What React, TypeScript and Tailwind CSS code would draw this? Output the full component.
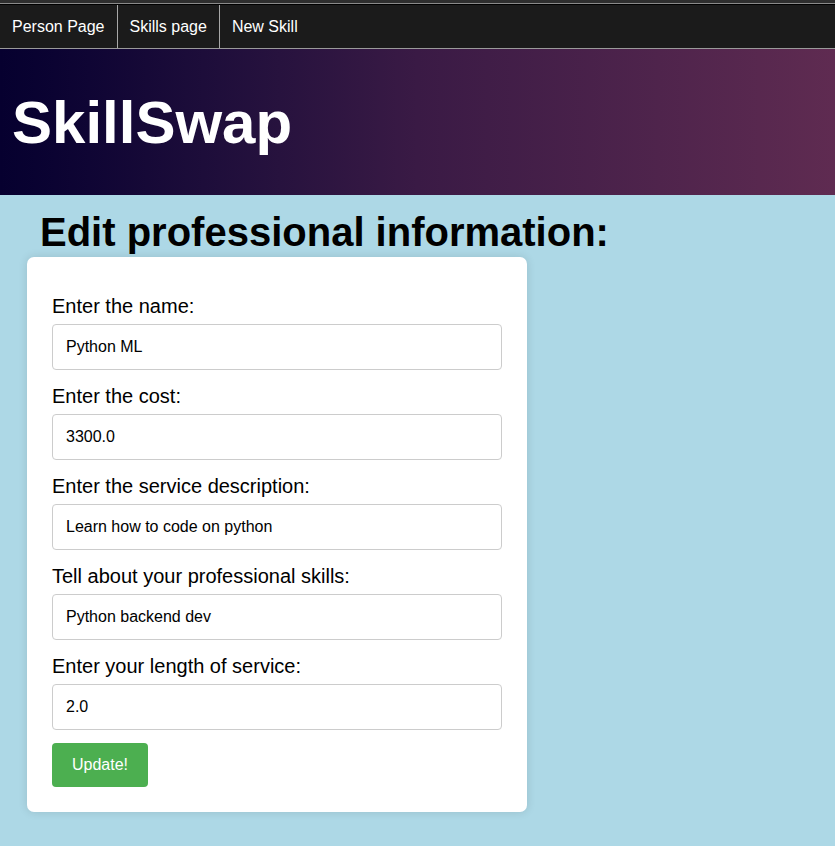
import React from "react";

const fields = [
  { label: "Enter the name:", value: "Python ML" },
  { label: "Enter the cost:", value: "3300.0" },
  { label: "Enter the service description:", value: "Learn how to code on python" },
  { label: "Tell about your professional skills:", value: "Python backend dev" },
  { label: "Enter your length of service:", value: "2.0" },
];

export default function App() {
  return (
    <div
      className="min-h-[846px] bg-[#add8e6] text-black"
      style={{ fontFamily: '"Liberation Sans", Arial, sans-serif' }}
    >
      <div className="h-[3px] bg-[#2e2e2e]" />
      <div className="h-px bg-[#8a8a8a]" />
      <div className="h-px bg-black" />
      <nav className="flex h-[43px] bg-[#1b1b1b] text-[16px] text-white">
        <a className="flex items-center border-r border-[#a8a8a8] px-[12px]">Person Page</a>
        <a className="flex items-center border-r border-[#a8a8a8] px-[12px]">Skills page</a>
        <a className="flex items-center px-[12px]">New Skill</a>
      </nav>
      <div className="h-px bg-[#9a9a9a]" />
      <header className="bg-gradient-to-r from-[#06002f] via-[#3a1a45] to-[#5f2b51] px-[12px] pt-[40px] pb-[39px]">
        <h1 className="text-[60px] font-bold leading-[67px] text-white">SkillSwap</h1>
      </header>
      <main className="pb-[34px]">
        <h1 className="pl-[40px] pt-[14px] text-[40px] font-bold leading-[46px]">
          Edit professional information:
        </h1>
        <div className="ml-[27px] mt-[2px] w-[500px] rounded-[7px] bg-white px-[25px] pt-[38px] pb-[25px] shadow-[0_0_10px_rgba(0,0,0,0.12)]">
          {fields.map((f, i) => (
            <div key={i} className={i > 0 ? "mt-[15px]" : ""}>
              <label className="block text-[20px] leading-[23px]">{f.label}</label>
              <input
                readOnly
                value={f.value}
                className="mt-[6px] block h-[46px] w-[450px] rounded-[4px] border border-[#cccccc] bg-white px-[13px] text-[16px] text-black outline-none"
                style={{ fontFamily: '"Liberation Sans", Arial, sans-serif' }}
              />
            </div>
          ))}
          <button
            className="mt-[13px] h-[44px] w-[96px] rounded-[4px] bg-[#4caf50] text-[16px] text-white"
            style={{ fontFamily: '"Liberation Sans", Arial, sans-serif' }}
          >
            Update!
          </button>
        </div>
      </main>
    </div>
  );
}
